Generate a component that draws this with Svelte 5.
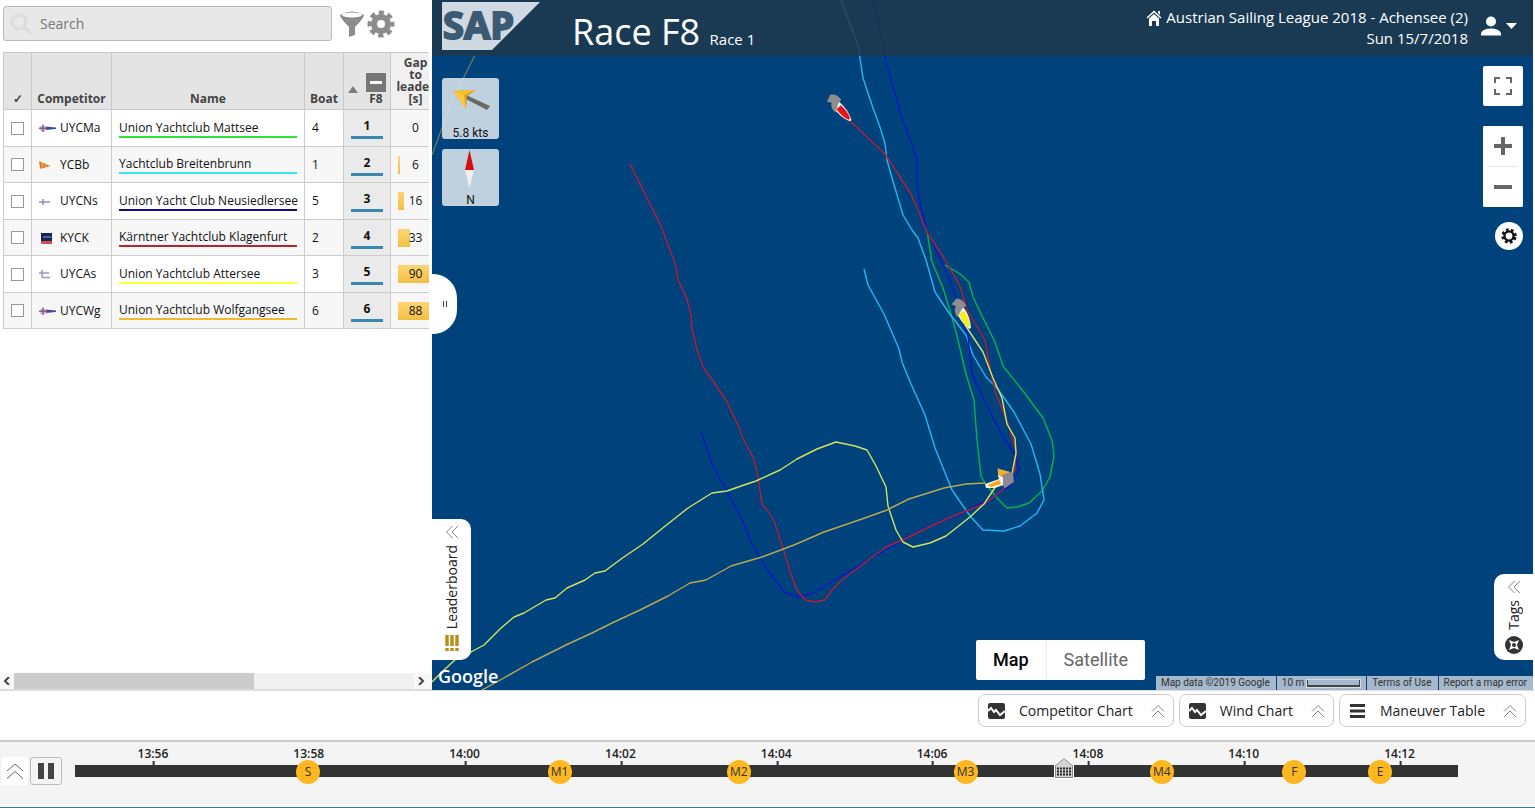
<script lang="ts">
  type Competitor = {
    short: string;
    name: string;
    boat: number;
    rank: number;
    gap: number;
    bar: number;
    color: string;
    flag: string;
  };

  const competitors: Competitor[] = [
    { short: "UYCMa", name: "Union Yachtclub Mattsee", boat: 4, rank: 1, gap: 0, bar: 0, color: "#2fe33a", flag: "cross" },
    { short: "YCBb", name: "Yachtclub Breitenbrunn", boat: 1, rank: 2, gap: 6, bar: 2, color: "#3ce6ea", flag: "pennant" },
    { short: "UYCNs", name: "Union Yacht Club Neusiedlersee", boat: 5, rank: 3, gap: 16, bar: 6, color: "#120c8c", flag: "thin" },
    { short: "KYCK", name: "Kärntner Yachtclub Klagenfurt", boat: 2, rank: 4, gap: 33, bar: 12, color: "#b3242c", flag: "square" },
    { short: "UYCAs", name: "Union Yachtclub Attersee", boat: 3, rank: 5, gap: 90, bar: 34, color: "#fbff3c", flag: "double" },
    { short: "UYCWg", name: "Union Yachtclub Wolfgangsee", boat: 6, rank: 6, gap: 88, bar: 33, color: "#f0b92f", flag: "cross" }
  ];

  const tracks = [
    { color: "#07b34f", points: "927,231 932,262 943,288 951,314 957,336 966,374 974,400 977,440 981,476 985,483 997,498 1007,508 1017,507 1029,503 1042,491 1050,477 1054,456 1052,440 1043,418 1023,391 1003,366 995,342 982,316 973,297 969,282 960,274 945,265" },
    { color: "#25b8f0", points: "841,0 850,24 858,45 863,78 873,108 881,130 885,144 887,160 892,178 903,215 912,230 918,238 926,260 935,292 949,313 966,335 973,355 986,377 997,388 1014,412 1031,444 1040,474 1044,500 1037,513 1020,526 1004,531 983,530 970,516 952,490 935,448 925,415 911,384 902,362 899,349 884,314 868,285 864,269" },
    { color: "#0a18cc", points: "873,0 880,29 886,62 901,115 912,145 917,160 917,184 921,208 927,231 938,254 948,275 957,300 968,336 972,374 984,400 1003,437 1016,456 1019,470 1011,485 994,497 960,514 924,529 900,542 873,557 832,582 813,593 798,597 784,592 766,568 753,546 742,520 725,488 712,464 706,446 701,432" },
    { color: "#b51e38", points: "847,118 885,154 911,194 928,234 944,258 960,286 967,310 985,340 991,374 996,394 1009,426 1016,452 1015,470 1003,490 984,504 956,515 929,527 907,538 886,547 871,558 858,568 842,580 832,590 825,600 815,602 805,600 797,590 790,571 783,548 774,521 768,511 762,504 757,471 753,457 743,439 738,425 727,402 713,381 703,367 697,350 692,329 691,315 687,299 678,280 676,266 668,245 661,226 651,206 630,164" },
    { color: "#d2e45c", points: "965,325 983,352 993,378 1002,398 1007,424 1015,438 1016,453 1012,474 996,486 984,504 970,517 946,536 930,543 913,547 903,542 896,530 888,506 886,487 876,466 867,450 855,446 836,442 817,449 797,459 780,470 756,481 744,485 727,491 712,493 688,508 664,527 643,544 621,559 605,571 595,573 585,580 567,588 555,598 546,600 524,613 514,617 500,629 484,645 471,652 456,659 444,670 432,682" },
    { color: "#b8a94e", points: "985,483 966,484 944,488 909,499 887,510 862,519 824,532 794,545 762,557 731,566 706,580 690,583 668,596 640,610 612,623 592,633 568,644 532,662 502,679 482,690" },
    { color: "#5c7868", points: "432,155 452,101 475,55" }
  ];

  /* The axis starts at 13:55, all positions are minutes after that */
  const duration = 17.75;
  const ticks = ["13:56", "13:58", "14:00", "14:02", "14:04", "14:06", "14:08", "14:10", "14:12"];
  const markers = [
    { label: "S", minute: 2.99 },
    { label: "M1", minute: 6.22 },
    { label: "M2", minute: 8.52 },
    { label: "M3", minute: 11.43 },
    { label: "M4", minute: 13.95 },
    { label: "F", minute: 15.65 },
    { label: "E", minute: 16.75 }
  ];

  const charts = [
    { label: "Competitor Chart", icon: "chart" },
    { label: "Wind Chart", icon: "chart" },
    { label: "Maneuver Table", icon: "table" }
  ];

  let search = $state("");
  let current = $state(12.69);
  let playing = $state(true);

  const percent = (minute: number) => (minute / duration) * 100;
</script>

{#snippet chevrons()}
  <svg class="chevrons" viewBox="0 0 14 14" width="14" height="14" aria-hidden="true">
    <path d="M1 7.5 7 1.5 13 7.5M1 13 7 7 13 13" />
  </svg>
{/snippet}

{#snippet boat(x: number, y: number, angle: number, color: string)}
  <g transform="translate({x} {y}) rotate({angle})">
    <path d="M-10 -4Q3 -6 13 -1V1Q3 6 -10 4Z" fill="#f4f1e8" />
    <path d="M-5 -3Q5 -4 11 -1V1Q5 4 -5 3Z" fill={color} />
    <path d="M-20 -2Q-17 -8 -9 -7L-8 -2 -3 6 -7 6Q-12 5 -13 2L-17 5Z" fill="#8d8d8d" />
  </g>
{/snippet}

<div class="app">
  <main>
    <section class="leaderboard">
      <form class="search" role="search" onsubmit={(e) => e.preventDefault()}>
        <div class="field">
          <svg viewBox="0 0 26 26" width="26" height="26" aria-hidden="true">
            <circle cx="11" cy="11" r="7" /><path d="m16 16 7 7" />
          </svg>
          <input type="search" aria-label="Search" placeholder="Search" bind:value={search} />
        </div>
        <button type="button" class="plain" aria-label="Filter">
          <svg viewBox="0 0 26 28" width="26" height="28" aria-hidden="true">
            <path fill="#8c8c8c" d="M1 5Q13-2 25 5Q25 8 16 17V25L10 27V17Q1 8 1 5Z" />
            <ellipse cx="13" cy="5" rx="10" ry="2.5" fill="#fff" />
          </svg>
        </button>
        <button type="button" class="plain" aria-label="Settings">
          <svg viewBox="0 0 28 28" width="28" height="28" aria-hidden="true">
            <circle cx="14" cy="14" r="7" fill="none" stroke="#8c8c8c" stroke-width="6" />
            <circle cx="14" cy="14" r="11" fill="none" stroke="#8c8c8c" stroke-width="5" stroke-dasharray="5 3.64" stroke-dashoffset="2.5" />
          </svg>
        </button>
      </form>

      <div class="scroller">
        <table>
          <colgroup>
            <col class="c-tick" /><col class="c-short" /><col class="c-name" /><col class="c-boat" /><col class="c-rank" /><col class="c-gap" />
          </colgroup>
          <thead>
            <tr>
              <th>✓</th>
              <th>Competitor</th>
              <th>Name</th>
              <th>Boat</th>
              <th class="rank">
                <div class="race">
                  <i class="sort"></i>
                  <span><button type="button" class="collapse" aria-label="Collapse race"></button>F8</span>
                </div>
              </th>
              <th class="gap">Gap<br />to<br />leader<br />[s]</th>
            </tr>
          </thead>
          <tbody>
            {#each competitors as c}
              <tr>
                <td class="tick"><input type="checkbox" aria-label="Select {c.short}" /></td>
                <td>
                  <div class="short">
                    <svg viewBox="0 0 17 12" width="17" height="12" aria-hidden="true">
                      {#if c.flag === "cross"}
                        <path d="M6 4.500 17 5.500V7L6 8Z" fill="#3a4d9c" />
                        <path d="M1 4H7V9H1Z" fill="#c9c6de" />
                        <path d="M0 6.200H8M4 2.500V10" stroke="#8a5c86" stroke-width="1.500" />
                      {:else if c.flag === "pennant"}
                        <path d="M0 2 12 7 1 10Z" fill="#e8a33c" />
                        <path d="M1 3 2 9M5 5 5 9M8 6V8" stroke="#d6603a" />
                      {:else if c.flag === "thin"}
                        <path d="M0 7H11M4 4V10" stroke="#8b8fc0" stroke-width="1.500" />
                      {:else if c.flag === "square"}
                        <path d="M2 1H13V9H2Z" fill="#1b2458" /><path d="M2 9H13V12H2Z" fill="#d44a4e" />
                        <path d="M4 5H12" stroke="#8fa3d0" />
                      {:else}
                        <path d="M0 5H10M3 2V9M3 9.500H11" stroke="#9498b4" stroke-width="1.500" />
                      {/if}
                    </svg>
                    {c.short}
                  </div>
                </td>
                <td class="name"><div style:border-color={c.color}>{c.name}</div></td>
                <td class="boat">{c.boat}</td>
                <td class="rank"><b>{c.rank}</b></td>
                <td class="gap"><i style:width="{c.bar}px"></i><span>{c.gap}</span></td>
              </tr>
            {/each}
          </tbody>
        </table>
      </div>

      <div class="scrollbar">
        <button type="button" aria-label="Scroll left"><svg viewBox="0 0 8 8" width="8" height="8"><path d="M6 0 2 4 6 8" /></svg></button>
        <div class="track"><i></i></div>
        <button type="button" aria-label="Scroll right"><svg viewBox="0 0 8 8" width="8" height="8"><path d="M2 0 6 4 2 8" /></svg></button>
      </div>
    </section>

    <section class="map">
      <svg class="water" viewBox="432 0 1101 690" preserveAspectRatio="xMinYMin slice" aria-hidden="true">
        {#each tracks as t}
          <polyline points={t.points} stroke={t.color} />
        {/each}
        {@render boat(842, 111, 48, "#e3141b")}
        {@render boat(964, 317, 62, "#f5ee1c")}
        <path d="M997 468 1013 473 1014 482 1005 488 1001 484Z" fill="#8b8a92" />
        <path d="M998 469 1010 472 998 477Z" fill="#f0b02a" />
        <path d="M985 484 999 479 998 475 1003 477 1003 485 995 488 986 488Z" fill="#f6efe0" />
        <path d="M988 485 999 480 1001 484 991 487Z" fill="#f4a51c" />
      </svg>

      <header>
        <a class="sap" href="#sap">
          <svg viewBox="0 0 98 48" width="98" height="48" role="img" aria-label="SAP">
            <path d="M0 0H98L50 48H0Z" fill="#d0d9e1" />
            <text x="1" y="37">SAP</text>
          </svg>
        </a>
        <h1>Race F8 <small>Race 1</small></h1>
        <div class="event">
          <a href="#event">
            <svg viewBox="0 0 16 16" width="16" height="16" aria-hidden="true">
              <path d="M1 8 8 1.500 15 8" fill="none" stroke="#fff" stroke-width="1.500" /><path d="M3 8.500 8 4 13 8.500V16H10V11H6V16H3Z" fill="#fff" /><path d="M12 1H14V5L12 3Z" fill="#fff" />
            </svg>
            Austrian Sailing League 2018 - Achensee (2)
          </a>
          <span>Sun 15/7/2018</span>
        </div>
        <button type="button" class="user" aria-label="User menu">
          <svg viewBox="0 0 36 20" width="36" height="20" aria-hidden="true">
            <circle cx="10" cy="5.500" r="5" fill="#fff" /><path d="M0 19.500V17Q2 12.500 10 12.500T20 17V19.500ZM25 7H36L30.500 13Z" fill="#fff" />
          </svg>
        </button>
      </header>

      <div class="overlay">
        <div class="instruments">
          <div class="instrument wind">
            <svg viewBox="0 0 57 44" width="57" height="44" aria-hidden="true">
              <path d="M24 17 48 28 45 32 22 20Z" fill="#6b6a62" />
              <path d="M11 13 34 12 25 18 24 31Z" fill="#d99b1c" />
              <path d="M11 13 34 12 22 17Z" fill="#f7c02a" /><path d="M11 13 22 17 24 31Z" fill="#fcc93f" />
            </svg>
            5.8 kts
          </div>
          <div class="instrument">
            <svg viewBox="0 0 57 40" width="57" height="40" aria-hidden="true">
              <path d="M27.500 1 32 21H23Z" fill="#d40d12" /><path d="M23 21H32L27.500 39Z" fill="#efefef" />
            </svg>
            N
          </div>
        </div>
        <div class="controls">
          <button type="button" class="white full" aria-label="Toggle fullscreen">
            <svg viewBox="0 0 18 18" width="18" height="18"><path d="M1 6V1H6M12 1H17V6M17 12V17H12M6 17H1V12" /></svg>
          </button>
          <div class="zoom">
            <button type="button" class="white" aria-label="Zoom in"><svg viewBox="0 0 18 18" width="18" height="18"><path d="M0 9H18M9 0V18" /></svg></button>
            <hr />
            <button type="button" class="white" aria-label="Zoom out"><svg viewBox="0 0 18 18" width="18" height="18"><path d="M0 9H18" /></svg></button>
          </div>
          <button type="button" class="round" aria-label="Map settings">
            <svg viewBox="0 0 18 18" width="18" height="18">
              <circle cx="9" cy="9" r="4.600" fill="none" stroke="#111" stroke-width="2.400" />
              <circle cx="9" cy="9" r="6.200" fill="none" stroke="#111" stroke-width="3" stroke-dasharray="2.600 2.270" stroke-dashoffset="3.700" />
            </svg>
          </button>
        </div>
      </div>

      <button type="button" class="drag" aria-label="Resize leaderboard">
        <svg viewBox="0 0 4 6" width="4" height="6"><path d="M.5 0V6M3.500 0V6" stroke="#444" /></svg>
      </button>

      <button type="button" class="tab left">
        {@render chevrons()}
        <span>Leaderboard</span>
        <svg viewBox="0 0 14 16" width="14" height="16" aria-hidden="true"><path d="M2 0V11M7 0V11M12 0V11M2 13V16M7 13V16M12 13V16" stroke="#bb8e1c" stroke-width="3.500" /></svg>
      </button>
      <button type="button" class="tab right">
        {@render chevrons()}
        <span>Tags</span>
        <svg viewBox="0 0 18 18" width="18" height="18" aria-hidden="true">
          <circle cx="9" cy="9" r="9" fill="#333" /><path d="M4 4 9 6 14 4 12 9 14 14 9 12 4 14 6 9Z" fill="#fff" /><circle cx="9" cy="9" r="2" fill="#333" />
        </svg>
      </button>

      <span class="google">Google</span>
      <div class="maptype">
        <button type="button" class="active">Map</button>
        <button type="button">Satellite</button>
      </div>
      <div class="legal">
        <span>Map data ©2019 Google</span>
        <span class="scale">10 m <i></i></span>
        <a href="#terms">Terms of Use</a>
        <a href="#report">Report a map error</a>
      </div>
    </section>
  </main>

  <nav class="charts">
    {#each charts as chart}
      <button type="button">
        {#if chart.icon === "chart"}
          <svg viewBox="0 0 18 16" width="18" height="16" aria-hidden="true"><rect width="17" height="16" rx="2" fill="#333" /><path d="M0 8 3 5 6 9 8 7 12 12 17 8" fill="none" stroke="#fff" stroke-width="2" /></svg>
        {:else}
          <svg viewBox="0 0 18 16" width="18" height="16" aria-hidden="true"><path d="M1 2.500H16M1 8H16M1 13.500H16" stroke="#333" stroke-width="3" /></svg>
        {/if}
        <span>{chart.label}</span>
        {@render chevrons()}
      </button>
    {/each}
  </nav>

  <footer>
    <button type="button" class="expand" aria-label="Expand timeline">
      <svg viewBox="0 0 18 18" width="18" height="18"><path d="M1 9 9 2 17 9M1 16.500 9 9.500 17 16.500" /></svg>
    </button>
    <button type="button" class="play" aria-label={playing ? "Pause" : "Play"} onclick={() => (playing = !playing)}>
      <svg viewBox="0 0 16 16" width="16" height="16"><path d={playing ? "M0 0H6V16H0ZM10 0H16V16H10Z" : "M1 0 16 8 1 16Z"} /></svg>
    </button>
    <div class="timeline">
      {#each ticks as tick, i}
        <span class="time" style:left="{percent(1 + i * 2)}%">{tick}</span>
      {/each}
      <input type="range" aria-label="Race time" min="0" max={duration} step="0.01" bind:value={current} />
      <svg class="handle" style:left="{percent(current)}%" viewBox="0 0 20 22" width="20" height="22" aria-hidden="true">
        <path d="M1 8 10 1 19 8V21H1Z" fill="#d2d2d2" stroke="#fff" stroke-width="2" />
        <path d="M1.500 8.500 10 1.500 18.500 8.500V20.500H1.500Z" fill="none" stroke="#888" />
        <path d="M3 11.500H17M3 14.500H17M3 17.500H17" stroke="#222" stroke-width="2" stroke-dasharray="2 1" />
      </svg>
      {#each markers as m}
        <button type="button" class="marker" style:left="{percent(m.minute)}%" onclick={() => (current = m.minute)}>{m.label}</button>
      {/each}
    </div>
  </footer>
</div>

<style>
  :global(body) {
    background: #fff;
    font-family: "Open Sans", "Noto Sans", sans-serif;
    color: #222;
  }

  * {
    box-sizing: border-box;
  }

  button {
    font: inherit;
    color: inherit;
    padding: 0;
    border: none;
    background: none;
    cursor: pointer;
  }

  a {
    color: inherit;
    text-decoration: none;
  }

  svg {
    display: block;
    flex: none;
  }

  .app {
    min-height: 100vh;
    display: flex;
    flex-direction: column;
  }

  main {
    flex: 1;
    display: flex;
  }

  .leaderboard {
    width: 432px;
    flex: none;
    display: flex;
    flex-direction: column;
  }

  .search {
    display: flex;
    align-items: center;
    gap: 2px;
    padding: 6px 0 0 3px;
  }

  .field {
    width: 329px;
    height: 35px;
    margin-right: 5px;
    padding-left: 4px;
    display: flex;
    align-items: center;
    background: #e8e8e8;
    border: 1px solid #bbb;
    border-radius: 3px;
  }

  .field svg {
    fill: none;
    stroke: #dcdcdc;
    stroke-width: 3;
  }

  .field input {
    flex: 1;
    margin-left: 4px;
    border: none;
    outline: none;
    background: none;
    font: 14px "Open Sans", sans-serif;
    color: #333;
  }

  .field input::placeholder {
    color: #777;
  }

  .scroller {
    flex: 1;
    margin: 11px 3px 0 3px;
    overflow: hidden;
  }

  table {
    width: 437px;
    height: 277px;
    table-layout: fixed;
    border-collapse: collapse;
    font-size: 12px;
    line-height: 12px;
  }

  .c-tick { width: 28px; }
  .c-short { width: 80px; }
  .c-name { width: 193px; }
  .c-boat { width: 39px; }
  .c-rank { width: 47px; }
  .c-gap { width: 50px; }

  th {
    height: 57px;
    padding: 4px 0;
    vertical-align: bottom;
    font-weight: 700;
    color: #444;
    background: #e4e4e4;
    border: 1px solid #c8c8c8;
  }

  th.gap {
    background: #f0f0f0;
  }

  td {
    padding: 1px 7px 0;
    border: 1px solid #ccc;
    color: #111;
  }

  tbody tr:nth-child(even) {
    background: #f7f7f7;
  }

  .race {
    display: flex;
    align-items: flex-end;
    justify-content: center;
    gap: 8px;
  }

  .sort {
    border: 5px solid transparent;
    border-top: none;
    border-bottom: 7px solid #777f86;
    margin-bottom: 12px;
  }

  .collapse {
    display: block;
    width: 20px;
    height: 19px;
    margin-bottom: 1px;
    border: solid #777;
    border-width: 8px 4px;
    background: #fff;
  }

  .tick input {
    display: block;
    appearance: none;
    width: 13px;
    height: 13px;
    margin: 0;
    border: 1px solid #999;
    background: #fff;
  }

  .short {
    display: flex;
    align-items: center;
    gap: 4px;
  }

  .name div {
    padding-top: 1px;
    line-height: 16px;
    border-bottom: 2px solid;
    white-space: nowrap;
  }

  td.rank {
    background: #eaeaea;
    text-align: center;
  }

  td.rank b {
    display: block;
    line-height: 18px;
    padding-bottom: 1px;
    border-bottom: 3px solid #3a86ae;
  }

  td.gap {
    position: relative;
    text-align: center;
    background: #f7f7f7;
  }

  td.gap i {
    position: absolute;
    left: 7px;
    top: 9px;
    height: 18px;
    background: linear-gradient(#fbd675, #f2bf45);
  }

  td.gap span {
    position: relative;
  }

  .scrollbar {
    height: 17px;
    display: flex;
    padding-right: 4px;
    background: #f8f8f8;
    border-bottom: 1px solid #ddd;
  }

  .scrollbar button {
    width: 14px;
    display: flex;
    align-items: center;
    justify-content: center;
  }

  .scrollbar svg {
    fill: none;
    stroke: #444;
    stroke-width: 2;
  }

  .track {
    flex: 1;
    background: #f0f0f0;
  }

  .track i {
    display: block;
    width: 60%;
    height: 16px;
    background: #cbcbcb;
  }

  .map {
    flex: 1;
    position: relative;
    margin-right: 2px;
    background: #00427c;
  }

  .water {
    position: absolute;
    inset: 0;
    width: 100%;
    height: 100%;
  }

  .water polyline {
    fill: none;
    stroke-width: 1.4;
    stroke-linejoin: round;
  }

  header {
    position: relative;
    height: 56px;
    padding: 2px 16px 0 10px;
    display: flex;
    align-items: flex-start;
    background: rgba(32, 56, 76, 0.82);
    color: #fff;
  }

  .sap text {
    font: 700 38px "Open Sans", sans-serif;
    fill: #3d5a74;
    stroke: #3d5a74;
    stroke-width: 2;
  }

  h1 {
    flex: 1;
    margin: 0 0 0 32px;
    font-size: 36px;
    line-height: 60px;
    font-weight: 400;
  }

  h1 small {
    font-size: 15px;
  }

  .event {
    display: flex;
    flex-direction: column;
    align-items: flex-end;
    padding-top: 5px;
    font-size: 15px;
    line-height: 21px;
  }

  .event a {
    display: flex;
    align-items: center;
    gap: 4px;
  }

  .user {
    margin: 14px 0 0 13px;
  }

  .overlay {
    position: relative;
    display: flex;
    justify-content: space-between;
    padding: 10px;
  }

  .instruments {
    display: flex;
    flex-direction: column;
    gap: 10px;
    padding-top: 12px;
  }

  .instrument {
    width: 57px;
    height: 57px;
    border-radius: 3px;
    background: rgba(218, 228, 237, 0.88);
    font: 12px/22px Roboto, sans-serif;
    color: #111;
    text-align: center;
  }

  .instrument.wind {
    height: 61px;
  }

  .controls {
    display: flex;
    flex-direction: column;
    align-items: flex-end;
  }

  .white {
    width: 40px;
    height: 40px;
    display: flex;
    align-items: center;
    justify-content: center;
    background: #fff;
    border-radius: 2px;
  }

  .white svg {
    fill: none;
    stroke: #666;
    stroke-width: 4;
  }

  .full svg {
    stroke-width: 2;
  }

  .zoom {
    margin: 20px 0 15px;
    background: #fff;
    border-radius: 2px;
  }

  .zoom hr {
    height: 1px;
    margin: 0 5px;
    border: none;
    background: #e6e6e6;
  }

  .round {
    width: 28px;
    height: 28px;
    display: flex;
    align-items: center;
    justify-content: center;
    border-radius: 50%;
    background: #fff;
  }

  .drag {
    position: absolute;
    left: 0;
    top: 274px;
    width: 25px;
    height: 60px;
    display: flex;
    align-items: center;
    justify-content: center;
    border-radius: 0 24px 24px 0;
    background: #fff;
  }

  .tab {
    position: absolute;
    bottom: 30px;
    display: flex;
    flex-direction: column;
    align-items: center;
    padding-top: 6px;
    background: #fff;
    font-size: 14px;
    line-height: 18px;
  }

  .tab span {
    writing-mode: vertical-rl;
    transform: rotate(180deg);
    margin: 6px 0;
  }

  .left {
    left: 0;
    width: 39px;
    height: 141px;
    border-radius: 0 10px 10px 0;
  }

  .right {
    right: 0;
    width: 39px;
    height: 86px;
    border-radius: 10px 0 0 10px;
  }

  .chevrons {
    fill: none;
    stroke: #888;
  }

  .tab .chevrons {
    transform: rotate(-90deg);
  }

  .google {
    position: absolute;
    left: 6px;
    bottom: 2px;
    font: 600 18px/24px "Open Sans", sans-serif;
    color: #fff;
  }

  .maptype {
    position: absolute;
    right: 388px;
    bottom: 10px;
    display: flex;
    height: 40px;
    background: #fff;
    border-radius: 2px;
    font: 18px Roboto, sans-serif;
    color: #666;
  }

  .maptype button {
    padding: 0 17px 1px;
  }

  .maptype .active {
    font-weight: 500;
    color: #000;
    border-right: 1px solid #eee;
  }

  .legal {
    position: absolute;
    right: 0;
    bottom: 0;
    display: flex;
    gap: 1px;
    font: 10px/14px Roboto, sans-serif;
    color: #333;
  }

  .legal > * {
    padding: 0 6px 0 5px;
    background: #a5b8cc;
  }

  .scale {
    display: flex;
    align-items: center;
    gap: 3px;
  }

  .scale i {
    width: 53px;
    height: 7px;
    border: solid #444;
    border-width: 0 1px 2px;
    outline: 1px solid #d5dee7;
  }

  .charts {
    display: flex;
    justify-content: flex-end;
    gap: 5px;
    padding: 3px 9px 13px;
    border-top: 1px solid #ddd;
  }

  .charts button {
    height: 33px;
    display: flex;
    align-items: center;
    padding: 0 8px 0 9px;
    border: 1px solid #ccc;
    border-radius: 7px;
    font-size: 14px;
  }

  .charts span {
    margin: 0 18px 0 13px;
  }

  footer {
    height: 68px;
    flex: none;
    display: flex;
    align-items: flex-start;
    padding-right: 77px;
    background: #f4f4f4;
    border-top: 2px solid #ccc;
    border-bottom: 1px solid #2f7ea6;
    box-shadow: inset 0 -3px #fff;
  }

  .expand,
  .play {
    height: 28px;
    margin-top: 15px;
    display: flex;
    align-items: center;
    justify-content: center;
  }

  .expand {
    width: 26px;
    margin-left: 2px;
    background: #fff;
  }

  .expand svg {
    fill: none;
    stroke: #666;
  }

  .play {
    width: 32px;
    margin-left: 2px;
    border: 1px solid #bbb;
    border-radius: 3px;
  }

  .play svg {
    fill: #444;
  }

  .timeline {
    flex: 1;
    position: relative;
    height: 60px;
    margin-left: 13px;
  }

  .timeline::before {
    content: "";
    position: absolute;
    inset: 23px 0 auto;
    height: 12px;
    background: #333;
  }

  /* Labels, flags and the handle all float above the time bar */
  .time {
    position: absolute;
    top: 4px;
    transform: translateX(-50%);
    font-size: 12px;
    line-height: 15px;
    font-weight: 600;
  }

  .time::after {
    content: "";
    position: absolute;
    left: 50%;
    top: 15px;
    width: 2px;
    height: 5px;
    background: #333;
  }

  .marker {
    position: absolute;
    top: 18px;
    width: 24px;
    height: 24px;
    transform: translateX(-50%);
    border-radius: 50%;
    background: #fdb721;
    font-size: 12px;
    line-height: 24px;
    color: #333;
  }

  .timeline input {
    appearance: none;
    position: absolute;
    left: -10px;
    top: 14px;
    width: calc(100% + 20px);
    height: 24px;
    margin: 0;
    background: none;
  }

  .timeline input::-webkit-slider-thumb {
    appearance: none;
    width: 20px;
    height: 22px;
  }

  .handle {
    position: absolute;
    top: 15px;
    transform: translateX(-50%);
    pointer-events: none;
  }
</style>
